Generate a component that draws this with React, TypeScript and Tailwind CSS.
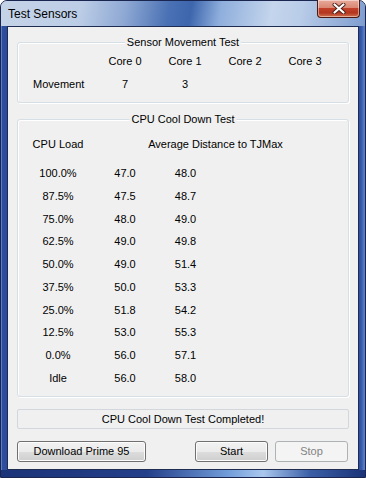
const coolDown = [
  ["100.0%", "47.0", "48.0"],
  ["87.5%", "47.5", "48.7"],
  ["75.0%", "48.0", "49.0"],
  ["62.5%", "49.0", "49.8"],
  ["50.0%", "49.0", "51.4"],
  ["37.5%", "50.0", "53.3"],
  ["25.0%", "51.8", "54.2"],
  ["12.5%", "53.0", "55.3"],
  ["0.0%", "56.0", "57.1"],
  ["Idle", "56.0", "58.0"],
];

function GroupBox({
  title,
  className,
  children,
}: {
  title: string;
  className: string;
  children: React.ReactNode;
}) {
  return (
    <div
      className={`relative ml-[9px] w-[332px] rounded-[3px] border border-[#d5dfe5] shadow-[inset_1px_1px_0_#ffffff,1px_1px_0_#ffffff] ${className}`}
    >
      <span className="absolute left-1/2 top-[-7px] -translate-x-1/2 whitespace-nowrap bg-[#f0f0f0] px-[2px] leading-[13px]">
        {title}
      </span>
      {children}
    </div>
  );
}

function Button({
  label,
  className,
  disabled,
}: {
  label: string;
  className: string;
  disabled?: boolean;
}) {
  return (
    <div
      className={`flex h-[21px] items-center justify-center rounded-[3px] border leading-none ${
        disabled
          ? "border-[#adb2b5] bg-[#f4f4f4] text-[#838383]"
          : "border-[#707070] bg-[linear-gradient(180deg,#f2f2f2_0%,#ebebeb_50%,#dddddd_50%,#cfcfcf_100%)] shadow-[inset_0_0_0_1px_#fcfcfc]"
      } ${className}`}
    >
      {label}
    </div>
  );
}

export default function App() {
  return (
    <div className="h-[478px] w-[366px] overflow-hidden bg-white font-['Liberation_Sans',Arial,sans-serif] text-[11px] text-black">
      <div className="flex h-full w-full flex-col rounded-t-[7px] border border-[#1a2650] bg-[linear-gradient(180deg,#9fb6da_0px,#6d8fcb_40px,#2f50a0_200px,#1f3a86_478px)]">
        {/* title bar */}
        <div className="flex h-[26px] items-start rounded-t-[6px] bg-[linear-gradient(100deg,#c5d3e7_0%,#bccde6_22%,#8fa9d4_34%,#4a71b4_46%,#3d66ad_52%,#8eaedc_60%,#c4d5ec_74%,#b9cce8_82%,#7e9dcf_100%)]">
          <span className="pl-[7px] pt-[5px] text-[12px] leading-[16px]">Test Sensors</span>
          <div className="-mt-px ml-auto mr-[5px] flex h-[18px] w-[43px] items-center justify-center rounded-b-[4px] border border-t-0 border-[#4c1a12] bg-[linear-gradient(180deg,#e8aa9c_0%,#d98873_45%,#c2402a_50%,#b3361f_75%,#d0704e_100%)] shadow-[inset_0_0_0_1px_rgba(255,255,255,0.45)]">
            <svg width="14" height="11" viewBox="0 0 14 11">
              <path d="M2.5 1.5 L11.5 9.5 M11.5 1.5 L2.5 9.5" stroke="#4a2018" strokeWidth="4" strokeLinecap="round" />
              <path d="M2.5 1.5 L11.5 9.5 M11.5 1.5 L2.5 9.5" stroke="#ffffff" strokeWidth="2.2" strokeLinecap="round" />
            </svg>
          </div>
        </div>

        <div className="flex flex-1">
          <div className="w-[6px] bg-[linear-gradient(90deg,#5b7fc2_0px,#5b7fc2_1px,#2f50a0_1px,#2c4c9a_6px)]" />

          {/* client area */}
          <div className="h-[444px] w-[352px] border border-[#1e2c52] bg-[#f0f0f0]">
            <GroupBox title="Sensor Movement Test" className="mt-[15px] h-[61px]">
              <div className="grid grid-cols-[77px_60px_60px_60px_60px] gap-y-[10px] pt-[12px] leading-[13px]">
                <div />
                <div className="text-center">Core 0</div>
                <div className="text-center">Core 1</div>
                <div className="text-center">Core 2</div>
                <div className="text-center">Core 3</div>
                <div className="pl-[15px]">Movement</div>
                <div className="text-center">7</div>
                <div className="text-center">3</div>
                <div />
                <div />
              </div>
            </GroupBox>

            <GroupBox title="CPU Cool Down Test" className="mt-[16px] h-[278px]">
              <div className="grid grid-cols-[80px_235px] pt-[18px] leading-[13px]">
                <div className="text-center">CPU Load</div>
                <div className="text-center">Average Distance to TJMax</div>
              </div>
              <div className="mt-[11px] flex flex-col">
                {coolDown.map(([load, a, b]) => (
                  <div key={load} className="grid h-[22.78px] grid-cols-[80px_54px_67px] items-center leading-[13px]">
                    <div className="text-center">{load}</div>
                    <div className="text-center">{a}</div>
                    <div className="text-center">{b}</div>
                  </div>
                ))}
              </div>
            </GroupBox>

            <div className="ml-[9px] mt-[12px] flex h-[20px] w-[332px] items-center justify-center rounded-[2px] border border-[#d2d7de] leading-none">
              CPU Cool Down Test Completed!
            </div>

            <div className="ml-[9px] mt-[12px] flex">
              <Button label="Download Prime 95" className="w-[129px]" />
              <Button label="Start" className="ml-[49px] w-[73px]" />
              <Button label="Stop" className="ml-[7px] w-[73px]" disabled />
            </div>
          </div>

          <div className="flex-1 bg-[linear-gradient(90deg,#2c4c9a_0px,#3a5fae_3px,#5b7fc2_5px,#5b7fc2_6px)]" />
        </div>

        <div className="h-[7px] bg-[linear-gradient(90deg,#1b3378_0%,#243f8a_40%,#6f9bd8_62%,#a9c7ee_72%,#3a5ea6_85%,#1b3378_100%)]" />
      </div>
    </div>
  );
}
